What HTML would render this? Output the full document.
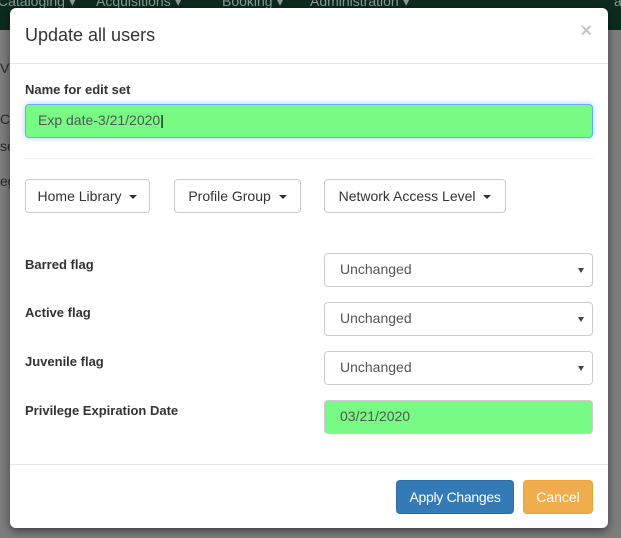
<!DOCTYPE html>
<html><head><style>
body{margin:0;width:621px;height:538px;overflow:hidden;font-family:"Liberation Sans",sans-serif;background:#7d7d7d;position:relative;color:#333}
.nav{position:absolute;left:0;top:0;width:621px;height:30px;background:#0c2a1e;color:#8d9a94;font-size:14px}
.nav span{position:absolute;top:-7px}
.side{position:absolute;color:#2a2a2a;font-size:14px}
.modal{position:absolute;left:10px;top:8px;width:598px;height:520px;background:#fff;border-radius:6px;box-shadow:0 3px 9px rgba(0,0,0,.5)}
h4{position:absolute;left:15px;top:17px;margin:0;font-size:18px;font-weight:normal;color:#333}
.x{position:absolute;right:16px;top:12px;font-size:20px;font-weight:bold;color:#c8c8c8}
.line{position:absolute;left:0;width:598px;height:1px;background:#e5e5e5}
label{position:absolute;font-size:13px;font-weight:bold;color:#333}
.inp{position:absolute;box-sizing:border-box;border:1px solid #ccc;border-radius:4px;font-size:14px;color:#555;padding-left:15px;line-height:31px}
.green{background:#77fb85}
.btn{position:absolute;box-sizing:border-box;border:1px solid #ccc;border-radius:4px;height:34px;line-height:32px;font-size:14px;color:#333;text-align:center;background:#fff}
.caret{display:inline-block;border-top:4px solid #333;border-left:4px solid transparent;border-right:4px solid transparent;vertical-align:middle;margin-left:4px}
.sel::after{content:"";position:absolute;right:8px;top:14px;border-top:5px solid #444;border-left:3px solid transparent;border-right:3px solid transparent}
</style></head><body>
<div class="nav"><span style="left:-2px">Cataloging ▾</span><span style="left:96px">Acquisitions ▾</span><span style="left:222px">Booking ▾</span><span style="left:310px">Administration ▾</span><span style="left:614px">a</span></div>
<div class="side" style="left:0;top:60px">Vi</div>
<div class="side" style="left:0;top:111px">C</div>
<div class="side" style="left:0;top:138px">se</div>
<div class="side" style="left:0;top:173px">eg</div>
<div class="modal">
<h4>Update all users</h4><div class="x">×</div>
<div class="line" style="top:55px"></div>
<label style="left:15px;top:74px">Name for edit set</label>
<div class="inp green" style="left:15px;top:96px;width:568px;height:34px;padding-left:12px;border-color:#66afe9;box-shadow:0 0 6px rgba(102,175,233,.6)">Exp date-3/21/2020<span style="color:#000">|</span></div>
<div class="line" style="top:150px;left:15px;width:568px;background:#eee"></div>
<div class="btn" style="left:15px;top:171px;width:125px">Home Library <span class="caret"></span></div>
<div class="btn" style="left:164px;top:171px;width:127px">Profile Group <span class="caret"></span></div>
<div class="btn" style="left:314px;top:171px;width:182px">Network Access Level <span class="caret"></span></div>
<label style="left:15px;top:249px">Barred flag</label>
<div class="inp sel" style="left:314px;top:245px;width:269px;height:34px">Unchanged</div>
<label style="left:15px;top:297px">Active flag</label>
<div class="inp sel" style="left:314px;top:294px;width:269px;height:34px">Unchanged</div>
<label style="left:15px;top:346px">Juvenile flag</label>
<div class="inp sel" style="left:314px;top:343px;width:269px;height:34px">Unchanged</div>
<label style="left:15px;top:395px">Privilege Expiration Date</label>
<div class="inp green" style="left:314px;top:392px;width:269px;height:34px">03/21/2020</div>
<div class="line" style="top:456px"></div>
<div class="btn" style="left:386px;top:472px;width:118px;background:#337ab7;border-color:#2e6da4;color:#fff;letter-spacing:-0.3px">Apply Changes</div>
<div class="btn" style="left:513px;top:472px;width:70px;background:#f0ad4e;border-color:#eea236;color:#fff">Cancel</div>
</div>
</body></html>
